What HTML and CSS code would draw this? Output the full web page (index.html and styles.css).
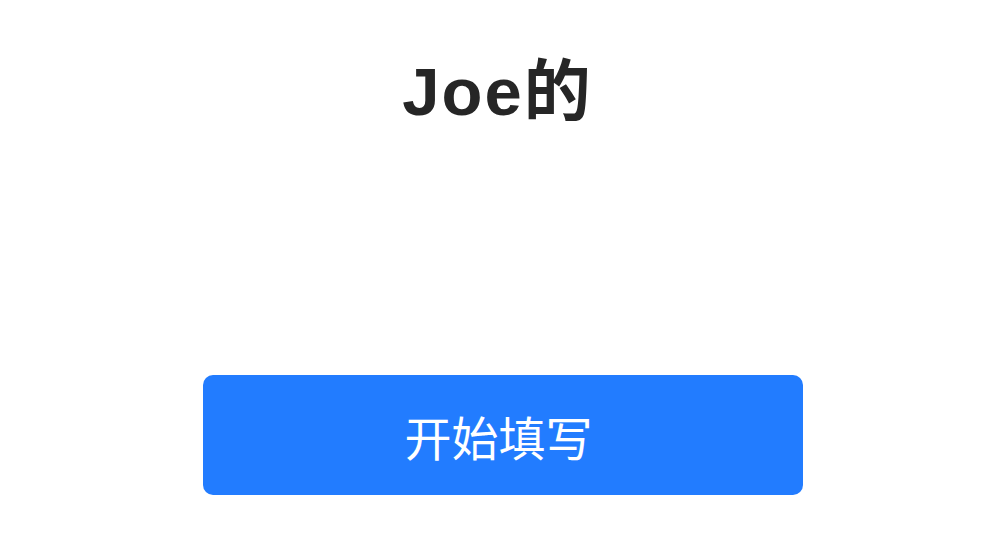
FILE: index.html
```html
<!DOCTYPE html>
<html lang="zh">
<head>
<meta charset="utf-8">
<link rel="stylesheet" href="styles.css">
</head>
<body>
<div class="page">
  <h1 class="title">Joe的</h1>
  <button class="start-btn">开始填写</button>
</div>
</body>
</html>
```
FILE: styles.css
```css
html, body {
  margin: 0;
  padding: 0;
  background: #ffffff;
}
.page {
  width: 1005px;
  height: 543px;
  display: flex;
  flex-direction: column;
  align-items: center;
  font-family: "Liberation Sans", "Noto Sans CJK SC", sans-serif;
}
.title {
  margin: 52px 0 0 0;
  padding-right: 10px;
  font-size: 67px;
  line-height: 80px;
  font-weight: 700;
  letter-spacing: 2px;
  color: #262626;
}
.start-btn {
  margin-top: 243px;
  width: 600px;
  height: 120px;
  border: none;
  border-radius: 10px;
  background: #227cff;
  color: #ffffff;
  font-family: "Noto Sans CJK SC", sans-serif;
  font-size: 47px;
  padding: 0 8px 0 0;
}
```
